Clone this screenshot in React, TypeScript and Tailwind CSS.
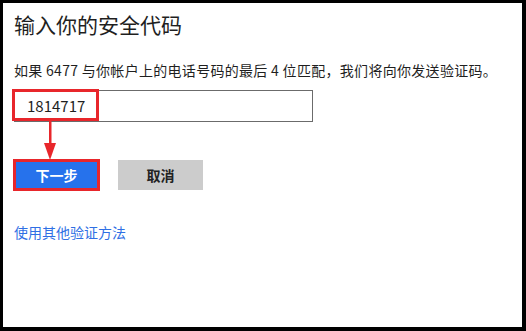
export default function App() {
  const font = { fontFamily: '"Microsoft YaHei", "Noto Sans CJK SC", "Noto Sans", sans-serif' }
  return (
    <div
      className="w-[526px] h-[331px] bg-white border-l-[3px] border-t-[3px] border-r-[4px] border-b-[4px] border-black text-[#1f1f1f]"
      style={font}
    >
      <div className="relative pl-[11px] pt-[7px]">
        <h1 className="text-[21px] leading-[28px]">输入你的安全代码</h1>

        <p className="mt-[22px] text-[14px] leading-[20px] tracking-[0.3px]">
          如果 6477 与你帐户上的电话号码的最后 4 位匹配，我们将向你发送验证码。
        </p>

        <div className="mt-[10px] w-[299px] h-[32px] border border-[#6b6b6b] pl-[12px] flex items-center text-[15px] font-normal">
          1814717
        </div>

        <div className="mt-[38px] flex items-center gap-[21px] pl-[2px]">
          <button className="w-[81px] h-[26px] bg-[#2672ec] text-white text-[14px] font-bold">下一步</button>
          <button className="w-[85px] h-[30px] bg-[#cccccc] text-[#222] text-[14px] font-bold">取消</button>
        </div>

        <a className="block mt-[32px] text-[14px] leading-[20px] text-[#2f6fe4]">使用其他验证方法</a>

        {/* annotations */}
        <div className="absolute left-[9px] top-[86px] w-[87px] h-[32px] border-[3px] border-[#e8262b]" />
        <div className="absolute left-[10px] top-[156px] w-[87px] h-[32px] border-[3px] border-[#e8262b]" />
        <svg className="absolute left-[40px] top-[118px]" width="14" height="40" viewBox="0 0 14 40">
          <rect x="6" y="0" width="2.5" height="24" fill="#e8262b" />
          <polygon points="1,22 13,22 7,39" fill="#e8262b" />
        </svg>
      </div>
    </div>
  )
}
